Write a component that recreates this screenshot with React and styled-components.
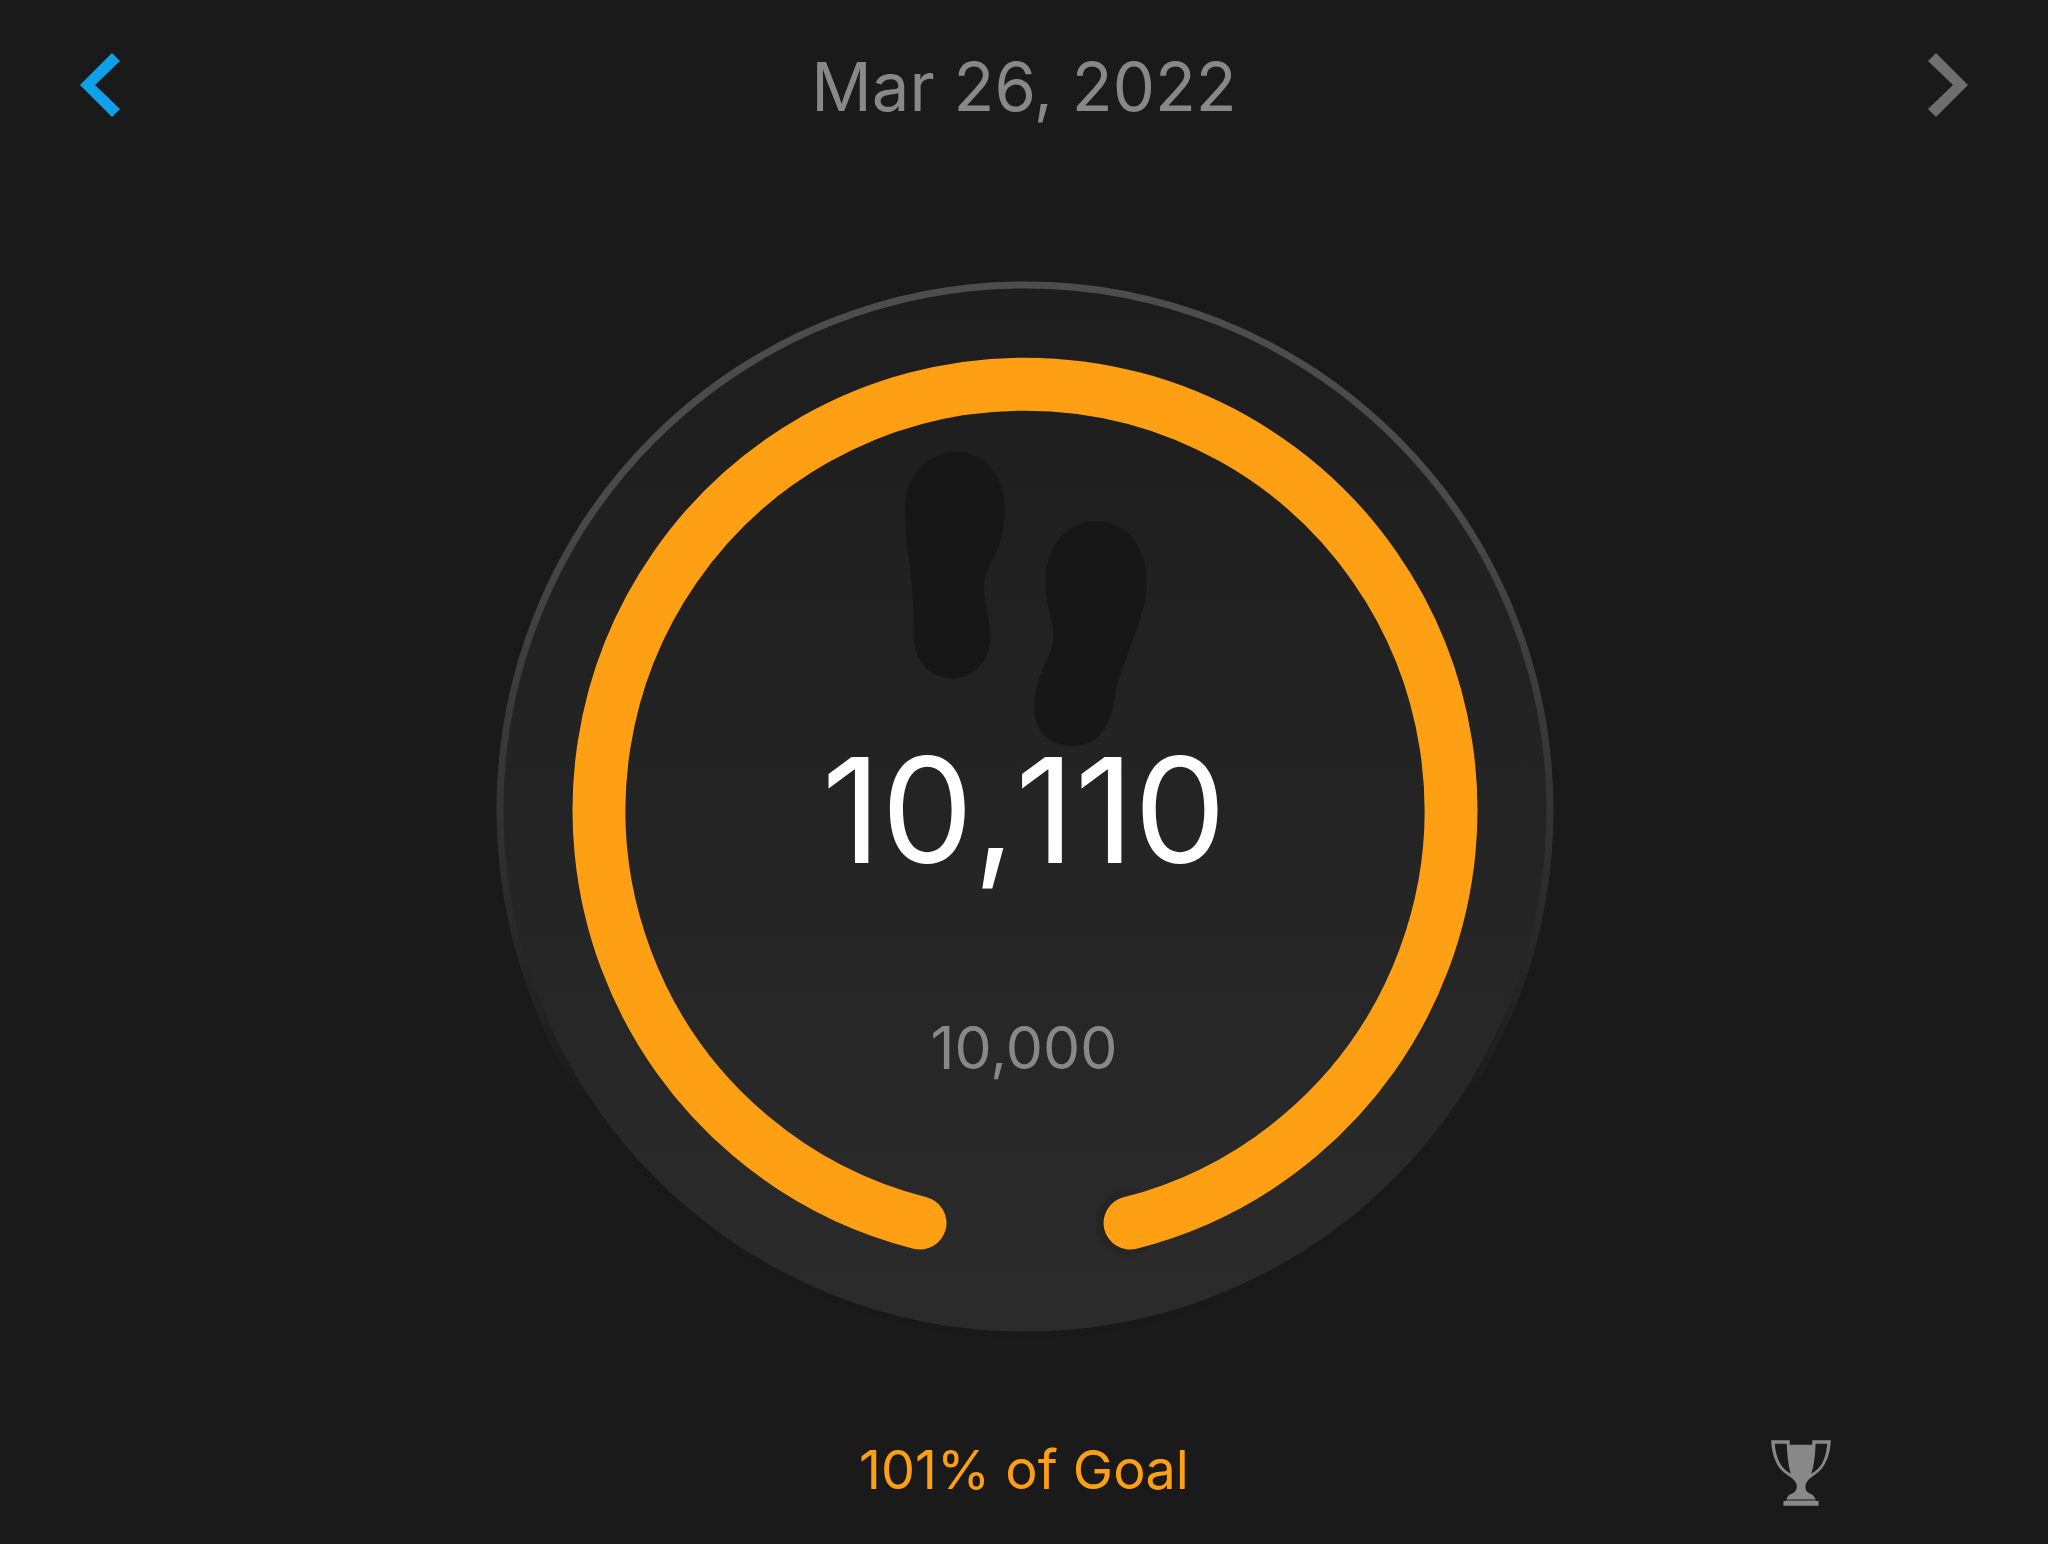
import React from "react";
import styled, { createGlobalStyle } from "styled-components";

const GlobalStyle = createGlobalStyle`
  *, *::before, *::after { box-sizing: border-box; }
  body {
    margin: 0;
    background: #1a1a1a;
    font-family: Inter, "Liberation Sans", sans-serif;
    font-weight: 400;
  }
`;

const Page = styled.main`
  display: flex;
  flex-direction: column;
  align-items: center;
  min-height: 100vh;
  padding: 45px 0 32px;
  background: #1a1a1a;
  color: #888888;
`;

const Header = styled.header`
  display: grid;
  grid-template-columns: 1fr auto 1fr;
  align-items: start;
  width: 100%;
  padding: 0 76px;
`;

const NavButton = styled.button`
  display: flex;
  justify-self: ${(p) => p.$side};
  padding: 8px 4px;
  border: 0;
  background: transparent;
  color: ${(p) => p.$color};
  cursor: pointer;
`;

const DateTitle = styled.h1`
  margin: 0;
  font-size: 67px;
  font-weight: 400;
  line-height: 84px;
  color: #888888;
`;

const Gauge = styled.section`
  display: grid;
  width: 100%;
  max-width: 1058px;
  margin-top: 152px;
`;

const Dial = styled.svg`
  grid-area: 1 / 1;
  display: block;
  width: 100%;
  height: auto;
  overflow: visible;
`;

const Readout = styled.div`
  grid-area: 1 / 1;
  z-index: 1;
  display: grid;
  grid-template-rows: 1fr auto 1fr;
  justify-items: center;
`;

const Steps = styled.strong`
  grid-row: 2;
  font-size: 146px;
  font-weight: 400;
  font-kerning: none;
  line-height: 176px;
  color: #ffffff;
`;

const Target = styled.span`
  grid-row: 3;
  padding-top: 114px;
  font-size: 59px;
  line-height: 72px;
`;

const Footer = styled.footer`
  display: grid;
  grid-template-columns: 1fr auto 1fr;
  align-items: start;
  width: 100%;
  margin-top: 99px;
`;

const GoalText = styled.p`
  grid-column: 2;
  margin: 0;
  font-size: 54px;
  font-kerning: none;
  line-height: 64px;
  color: #ff9f14;
`;

const TrophyButton = styled.button`
  display: flex;
  justify-self: end;
  margin-right: 217px;
  padding: 2px 0 0;
  border: 0;
  background: transparent;
  color: #888888;
  cursor: pointer;
`;

const Chevron = ({ flip }) => (
  <svg width="40" height="64" viewBox="0 0 40 64" aria-hidden="true">
    <path
      d="M32 0 40 8 15 32 40 56 32 64 0 32Z"
      fill="currentColor"
      transform={flip ? "translate(40 0) scale(-1 1)" : undefined}
    />
  </svg>
);

const Trophy = () => (
  <svg width="60" height="66" viewBox="93 61 180 199" aria-hidden="true">
    <path
      fill="currentColor"
      fillRule="evenodd"
      d="M93 62H149V75H217V62H273C272 91 265 121 248 144C234 163 211 172 201 187C194 198 195 211 203 218C213 226 223 226 226 239H140C143 226 153 226 163 218C171 211 173 198 166 187C156 172 131 163 117 144C101 121 94 91 93 62ZM104 72C106 99 113 124 126 141C134 151 143 157 152 163C144 135 141 102 140 72ZM262 72H227C226 102 223 135 214 163C223 157 232 151 240 141C253 124 260 99 262 72Z"
    />
    <path fill="currentColor" d="M130 245H236V259H130Z" />
    <path fill="currentColor" opacity="0.5" d="M138 239H228V245H138Z" />
  </svg>
);

const Footprints = () => (
  <g fill="#171717" transform="translate(364 139) scale(0.33333)">
    <path d="M290 95C374 95 434 168 434 265C434 315 426 360 408 400C390 437 372 460 372 505C372 550 390 590 390 660C390 725 340 775 277 775C210 775 163 725 163 655C163 570 157 500 148 430C140 370 135 320 135 265C135 165 205 95 290 95Z" />
    <path d="M708 303C795 303 860 375 860 480C860 560 835 610 815 670C795 730 772 770 762 850C746 935 706 978 635 978C565 978 523 930 523 865C523 790 550 750 570 700C582 668 582 640 575 605C566 560 556 530 556 485C556 380 620 303 708 303Z" />
  </g>
);

export default function App() {
  return (
    <>
      <GlobalStyle />
      <Page>
        <Header>
          <NavButton $side="start" $color="#0fa0ea" aria-label="Previous day">
            <Chevron />
          </NavButton>
          <DateTitle>Mar 26, 2022</DateTitle>
          <NavButton $side="end" $color="#6f6f6f" aria-label="Next day">
            <Chevron flip />
          </NavButton>
        </Header>

        <Gauge aria-label="Daily steps">
          <Dial viewBox="-1 0 1058 1058" aria-hidden="true">
            <defs>
              <linearGradient id="disc" x1="0" y1="0" x2="0" y2="1">
                <stop offset="0" stopColor="#1d1d1d" />
                <stop offset="1" stopColor="#2b2b2b" />
              </linearGradient>
              <linearGradient id="rim" x1="0" y1="0" x2="0" y2="1">
                <stop offset="0" stopColor="#4d4d4d" />
                <stop offset="0.2" stopColor="#4a4a4a" />
                <stop offset="0.5" stopColor="#333333" />
                <stop offset="0.78" stopColor="#1a1a1a" />
                <stop offset="1" stopColor="#191919" />
              </linearGradient>
              <filter id="soft" x="-50%" y="-50%" width="200%" height="200%">
                <feGaussianBlur stdDeviation="4" />
              </filter>
            </defs>
            <circle cx="529" cy="529" r="522" fill="url(#disc)" />
            <circle cx="529" cy="529" r="525" fill="none" stroke="url(#rim)" strokeWidth="7" />
            <Footprints />
            <circle cx="632" cy="942" r="27" fill="#171717" opacity="0.6" filter="url(#soft)" />
            <path
              d="M424 942A426 426 0 1 1 634 942"
              fill="none"
              stroke="#ff9f14"
              strokeWidth="53"
              strokeLinecap="round"
            />
          </Dial>
          <Readout>
            <Steps>10,110</Steps>
            <Target>10,000</Target>
          </Readout>
        </Gauge>

        <Footer>
          <GoalText>101% of Goal</GoalText>
          <TrophyButton aria-label="Achievements">
            <Trophy />
          </TrophyButton>
        </Footer>
      </Page>
    </>
  );
}
